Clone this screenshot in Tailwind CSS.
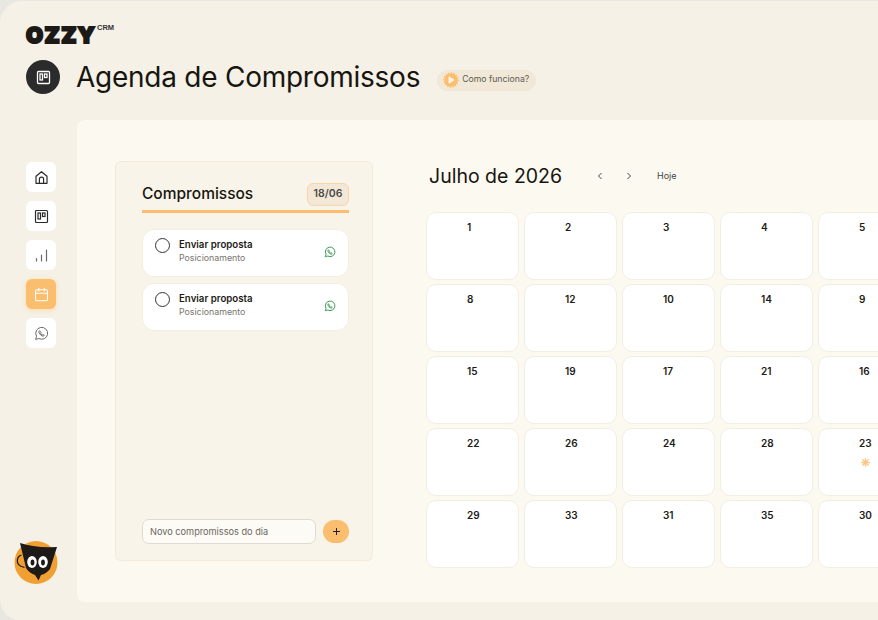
<!DOCTYPE html>
<html lang="en">
<head>
    <meta charset="UTF-8">
    <title>Agenda de Compromissos</title>
    <script src="https://cdn.jsdelivr.net/npm/@tailwindcss/browser@4"></script>
</head>
<body class="bg-[#e9e7e1] w-[878px] h-[620px] overflow-hidden font-['Inter',sans-serif]">
    <div class="w-[878px] h-[620px] mt-px bg-[#f5f1e7] rounded-tl-[22px] rounded-bl-[22px] overflow-hidden flex flex-col">
        <!-- logo + title -->
        <header class="h-[119px] shrink-0 pl-[26px] pt-[23px]">
            <div class="flex items-start h-[23px]">
                <span class="w-[71px] uppercase font-black text-[22px] leading-[18px] mt-[2px] tracking-[1.4px] text-[#1c1a17] [-webkit-text-stroke:2px_#1c1a17]">ozzy</span>
                <span class="font-['Liberation_Sans'] font-bold text-[7.5px] leading-[8px] text-[#333]">CRM</span>
            </div>
            <div class="flex items-center mt-[13px]">
                <div class="w-[34px] h-[34px] rounded-full bg-[#2b2b2b] flex items-center justify-center">
                    <svg width="15" height="15" viewBox="0 0 15 15" fill="none" stroke="#fff" stroke-width="1.3"><rect x="1.5" y="1.5" width="12" height="12" rx="1"/><rect x="4" y="4" width="2.5" height="6"/><rect x="8.5" y="4" width="2.5" height="3.5"/></svg>
                </div>
                <h1 class="ml-4 text-[28px] leading-[34px] tracking-[-0.25px] text-[#17150f]">Agenda de Compromissos</h1>
                <div class="ml-[17px] mt-[6px] h-[21px] w-[99px] rounded-full bg-[#f1e8d8] border border-[#efe6d6] flex items-center pl-[5px]">
                    <svg width="16" height="16" viewBox="0 0 16 16" fill="none"><circle cx="8" cy="8" r="6.6" fill="#fbbd6e"/><circle cx="8" cy="8" r="7" stroke="#fbbd6e" stroke-width="1.4" stroke-dasharray="1.6 1.1"/><path d="M6 4.8 11 8l-5 3.2z" fill="#fdeed8" stroke="#fff" stroke-width="0.8" stroke-linejoin="round"/></svg>
                    <span class="ml-[3px] text-[8.7px] text-[#5d5a52]">Como funciona?</span>
                </div>
            </div>
        </header>

        <div class="flex flex-1 min-h-0">
            <!-- left nav -->
            <nav class="w-[77px] shrink-0 pl-[26px] pt-[42px] pb-[36px] flex flex-col">
                <div class="flex flex-col gap-[9px]">
                    <div class="w-[30px] h-[30px] rounded-md bg-white flex items-center justify-center">
                        <svg width="15" height="15" viewBox="0 0 15 15" fill="none" stroke="#2a2a2a" stroke-width="1.2" stroke-linejoin="round"><path d="M2 6.3 7.5 1.7 13 6.3V13.3H2z"/><path d="M5.4 13.3V9.3a2.1 2.1 0 0 1 4.2 0v4"/></svg>
                    </div>
                    <div class="w-[30px] h-[30px] rounded-md bg-white flex items-center justify-center">
                        <svg width="15" height="15" viewBox="0 0 15 15" fill="none" stroke="#2a2a2a" stroke-width="1.2"><rect x="1.5" y="1.5" width="12" height="12" rx="1"/><rect x="4" y="4" width="2.5" height="6"/><rect x="8.5" y="4" width="2.5" height="3.5"/></svg>
                    </div>
                    <div class="w-[30px] h-[30px] rounded-md bg-white flex items-center justify-center">
                        <svg width="15" height="15" viewBox="0 0 15 15" fill="none" stroke="#6a6a6a" stroke-width="1.2" stroke-linecap="round"><path d="M2.5 13v-2.5M7.5 13V7M12.5 13V2"/></svg>
                    </div>
                    <div class="w-[30px] h-[30px] rounded-md bg-[#fbbd6e] shadow-[0_1px_5px_#fbd9a8] flex items-center justify-center">
                        <svg width="15" height="15" viewBox="0 0 15 15" fill="none" stroke="#fff" stroke-width="1.1" stroke-linecap="round"><rect x="1.5" y="2.8" width="12" height="11" rx="1.5"/><path d="M1.5 6.3h12M4.8 1.2v2.8M10.2 1.2v2.8"/></svg>
                    </div>
                    <div class="w-[30px] h-[30px] rounded-md bg-white flex items-center justify-center">
                        <svg width="15" height="15" viewBox="0 0 24 24" fill="none" stroke="#555" stroke-width="1.4" stroke-linejoin="round"><path d="M2.5 21.5l1.6-5A9.5 9.5 0 1 1 7.7 20z"/><path d="M8.8 7.5c-1 .8-1.2 2-.6 3.4a10 10 0 0 0 5 5c1.4.5 2.6.3 3.3-.8l-2.3-1.6-1.1.8a6.5 6.5 0 0 1-2.7-2.7l.8-1.1z"/></svg>
                    </div>
                </div>
                <svg class="mt-auto -ml-[12px]" width="44" height="44" viewBox="0 0 44 44">
                    <circle cx="22" cy="21.5" r="21.5" fill="#f09f33"/>
                    <path d="M7.5 14a6 6 0 0 0-1 11l4 1.5" fill="none" stroke="#1d1a18" stroke-width="1.3"/>
                    <path d="M6 2 Q20 7 43 6 L36 28 Q32 33 27 34 L24.5 39.5 L21 34 Q15 32 12 27 Z" fill="#1d1a18"/>
                    <ellipse cx="18" cy="21" rx="4.8" ry="6" fill="#fff"/>
                    <ellipse cx="29" cy="21" rx="4.8" ry="6" fill="#fff"/>
                    <ellipse cx="18.5" cy="21.5" rx="1.9" ry="3" fill="#1d1a18"/>
                    <ellipse cx="29" cy="21.5" rx="1.9" ry="3" fill="#1d1a18"/>
                </svg>
            </nav>

            <!-- main panel -->
            <main class="flex-1 min-w-0 h-[482px] bg-[#fcf9f1] rounded-tl-[8px] rounded-bl-[8px] pl-[38px] pt-[41px] flex overflow-hidden">
                <!-- compromissos -->
                <section class="w-[258px] h-[400px] shrink-0 bg-[#f9f4e9] rounded-[6px] border border-dotted border-[#f3e0c4] pl-[26px] pr-[23px] pt-[19px] flex flex-col">
                    <div class="flex items-center justify-between border-b-[3px] border-[#fbbd6e] h-[26px] pb-[3px] box-content">
                        <h2 class="font-medium text-[15.5px] text-[#17150f]">Compromissos</h2>
                        <span class="w-[42px] h-[23px] rounded-[6px] bg-[#f3e8d8] border border-[#f8d6a6] flex items-center justify-center text-[10.5px] font-semibold text-[#4c4a45]">18/06</span>
                    </div>
                    <div class="mt-[16px] flex flex-col gap-[6px]">
                        <div class="h-[48px] rounded-[12px] bg-white border border-[#f5eee0] pl-[12px] pr-[12px] flex items-center">
                            <span class="w-[15px] h-[15px] -mt-[16px] rounded-full border border-[#333] shrink-0"></span>
                            <div class="ml-[9px] -mt-[4px] flex-1">
                                <p class="text-[9.7px] leading-[13px] font-semibold text-[#1d1b17]">Enviar proposta</p>
                                <p class="text-[8.8px] leading-[13px] text-[#77746d]">Posicionamento</p>
                            </div>
                            <svg class="-mt-[3px]" width="12" height="12" viewBox="0 0 24 24" fill="none" stroke="#3f9a5b" stroke-width="2" stroke-linejoin="round"><path d="M2.5 21.5l1.6-5A9.5 9.5 0 1 1 7.7 20z"/><path d="M8.8 7.5c-1 .8-1.2 2-.6 3.4a10 10 0 0 0 5 5c1.4.5 2.6.3 3.3-.8l-2.3-1.6-1.1.8a6.5 6.5 0 0 1-2.7-2.7l.8-1.1z"/></svg>
                        </div>
                        <div class="h-[48px] rounded-[12px] bg-white border border-[#f5eee0] pl-[12px] pr-[12px] flex items-center">
                            <span class="w-[15px] h-[15px] -mt-[16px] rounded-full border border-[#333] shrink-0"></span>
                            <div class="ml-[9px] -mt-[4px] flex-1">
                                <p class="text-[9.7px] leading-[13px] font-semibold text-[#1d1b17]">Enviar proposta</p>
                                <p class="text-[8.8px] leading-[13px] text-[#77746d]">Posicionamento</p>
                            </div>
                            <svg class="-mt-[3px]" width="12" height="12" viewBox="0 0 24 24" fill="none" stroke="#3f9a5b" stroke-width="2" stroke-linejoin="round"><path d="M2.5 21.5l1.6-5A9.5 9.5 0 1 1 7.7 20z"/><path d="M8.8 7.5c-1 .8-1.2 2-.6 3.4a10 10 0 0 0 5 5c1.4.5 2.6.3 3.3-.8l-2.3-1.6-1.1.8a6.5 6.5 0 0 1-2.7-2.7l.8-1.1z"/></svg>
                        </div>
                    </div>
                    <div class="mt-auto mb-[16px] flex items-center gap-[7px]">
                        <div class="w-[174px] h-[25px] rounded-[7px] bg-[#fdfbf6] border border-[#dedbd2] pl-[7px] flex items-center text-[9.2px] text-[#6b6860]">Novo compromissos do dia</div>
                        <div class="w-[26px] h-[23px] rounded-full bg-[#fbbd6e] flex items-center justify-center">
                            <svg width="7" height="7" viewBox="0 0 7 7" stroke="#222" stroke-width="1"><path d="M3.5 0v7M0 3.5h7"/></svg>
                        </div>
                    </div>
                </section>

                <!-- calendar -->
                <section class="ml-[53px] shrink-0">
                    <div class="flex items-center h-[30px] ml-[3px]">
                        <h2 class="mt-px text-[19.5px] text-[#17150f] w-[167px]">Julho de 2026</h2>
                        <svg width="8" height="8" viewBox="0 0 8 8" fill="none" stroke="#444" stroke-width="1"><path d="M5.5 1 2.5 4l3 3"/></svg>
                        <svg class="ml-[21px]" width="8" height="8" viewBox="0 0 8 8" fill="none" stroke="#444" stroke-width="1"><path d="M2.5 1l3 3-3 3"/></svg>
                        <span class="ml-[24px] text-[9px] text-[#444]">Hoje</span>
                    </div>
                    <div class="mt-[21px] grid grid-cols-[repeat(5,93px)] auto-rows-[68px] gap-x-[5px] gap-y-[4px] text-[10px] font-semibold text-[#1d1b17]">
                        <div class="bg-white rounded-[10px] border border-[#f3eee2] pt-[7px] pl-[40px]">1</div>
                        <div class="bg-white rounded-[10px] border border-[#f3eee2] pt-[7px] pl-[40px]">2</div>
                        <div class="bg-white rounded-[10px] border border-[#f3eee2] pt-[7px] pl-[40px]">3</div>
                        <div class="bg-white rounded-[10px] border border-[#f3eee2] pt-[7px] pl-[40px]">4</div>
                        <div class="bg-white rounded-[10px] border border-[#f3eee2] pt-[7px] pl-[40px]">5</div>
                        <div class="bg-white rounded-[10px] border border-[#f3eee2] pt-[7px] pl-[40px]">8</div>
                        <div class="bg-white rounded-[10px] border border-[#f3eee2] pt-[7px] pl-[40px]">12</div>
                        <div class="bg-white rounded-[10px] border border-[#f3eee2] pt-[7px] pl-[40px]">10</div>
                        <div class="bg-white rounded-[10px] border border-[#f3eee2] pt-[7px] pl-[40px]">14</div>
                        <div class="bg-white rounded-[10px] border border-[#f3eee2] pt-[7px] pl-[40px]">9</div>
                        <div class="bg-white rounded-[10px] border border-[#f3eee2] pt-[7px] pl-[40px]">15</div>
                        <div class="bg-white rounded-[10px] border border-[#f3eee2] pt-[7px] pl-[40px]">19</div>
                        <div class="bg-white rounded-[10px] border border-[#f3eee2] pt-[7px] pl-[40px]">17</div>
                        <div class="bg-white rounded-[10px] border border-[#f3eee2] pt-[7px] pl-[40px]">21</div>
                        <div class="bg-white rounded-[10px] border border-[#f3eee2] pt-[7px] pl-[40px]">16</div>
                        <div class="bg-white rounded-[10px] border border-[#f3eee2] pt-[7px] pl-[40px]">22</div>
                        <div class="bg-white rounded-[10px] border border-[#f3eee2] pt-[7px] pl-[40px]">26</div>
                        <div class="bg-white rounded-[10px] border border-[#f3eee2] pt-[7px] pl-[40px]">24</div>
                        <div class="bg-white rounded-[10px] border border-[#f3eee2] pt-[7px] pl-[40px]">28</div>
                        <div class="bg-white rounded-[10px] border border-[#f3eee2] pt-[7px] pl-[40px]">
                            23
                            <svg class="ml-[2px] mt-[7px]" width="9" height="9" viewBox="0 0 10 10" stroke="#fbc684" stroke-width="1.5" stroke-linecap="round"><path d="M5 .8v8.4M.8 5h8.4M2 2l6 6M8 2 2 8"/></svg>
                        </div>
                        <div class="bg-white rounded-[10px] border border-[#f3eee2] pt-[7px] pl-[40px]">29</div>
                        <div class="bg-white rounded-[10px] border border-[#f3eee2] pt-[7px] pl-[40px]">33</div>
                        <div class="bg-white rounded-[10px] border border-[#f3eee2] pt-[7px] pl-[40px]">31</div>
                        <div class="bg-white rounded-[10px] border border-[#f3eee2] pt-[7px] pl-[40px]">35</div>
                        <div class="bg-white rounded-[10px] border border-[#f3eee2] pt-[7px] pl-[40px]">30</div>
                    </div>
                </section>
            </main>
        </div>
    </div>
</body>
</html>
